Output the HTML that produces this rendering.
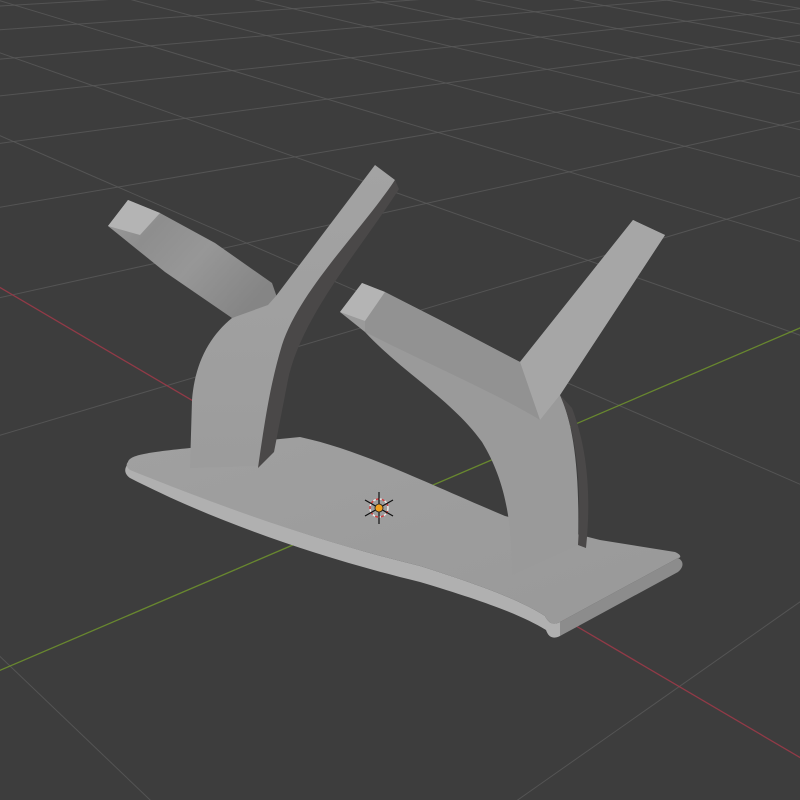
<!DOCTYPE html>
<html><head><meta charset="utf-8"><style>
html,body{margin:0;padding:0;background:#3d3d3d;width:800px;height:800px;overflow:hidden}
svg{display:block;overflow:hidden}
</style></head><body>
<svg id="s" width="800" height="800" viewBox="0 0 800 800" xmlns="http://www.w3.org/2000/svg">
<defs>
<linearGradient id="armL" x1="0" y1="0" x2="1" y2="0.6">
<stop offset="0" stop-color="#9c9c9c"/><stop offset="0.3" stop-color="#8e8e8e"/><stop offset="0.6" stop-color="#979797"/><stop offset="1" stop-color="#858585"/>
</linearGradient>
<linearGradient id="trunk" x1="0" y1="0" x2="0" y2="1">
<stop offset="0" stop-color="#a3a3a3"/><stop offset="1" stop-color="#9c9c9c"/>
</linearGradient>
<linearGradient id="baseTop" x1="0" y1="0" x2="1" y2="1">
<stop offset="0" stop-color="#a0a0a0"/><stop offset="1" stop-color="#999999"/>
</linearGradient>
</defs>
<g id="grid"></g>
<!-- base front strip -->
<path d="M128,464 C200,498 300,537 420,566 C480,585 520,600 545,616 C548,622 552,626 560,622 L560,636 C552,640 548,636 546,630 C520,614 480,600 420,582 C300,553 200,514 130,478 C124,474 124,468 128,464 Z" fill="#b0b0b0"/>
<path d="M560,622 L678,558 C684,561 684,567 678,572 L560,636 Z" fill="#8c8c8c"/>
<path d="M128,462 C130,456 140,453 190,448 L270,440 L300,437 C360,450 420,480 505,516 L600,540 L675,552 C682,555 681,558 678,558 L560,622 C552,626 548,622 545,616 C520,600 480,585 420,566 C300,537 200,498 130,470 C126,467 126,464 128,462 Z" fill="url(#baseTop)"/>
<!-- left post: left arm -->
<path d="M108,226 L128,200 L160,213 L215,243 L272,283 L280,306 L232,318 L165,272 Z" fill="url(#armL)"/>
<path d="M108,226 L128,200 L160,213 L140,235 Z" fill="#b4b4b4"/>
<!-- left post trunk + right arm -->
<path d="M190,468 L192,400 C195,362 210,336 232,318 L268,305 L276,296 L375,165 L395,180 C360,240 300,300 283,350 C272,395 266,435 258,466 Z" fill="url(#trunk)"/>
<path d="M395,180 L399,189 C360,250 298,320 287,385 L274,452 L258,468 C265,420 270,385 282,345 C300,290 360,232 395,180 Z" fill="#4a4848"/>
<!-- right post -->
<path d="M340,312 L362,283 L385,292 L440,320 L520,362 L633,220 L665,235 L560,395 C574,425 580,475 578,545 L512,575 C512,520 505,480 482,442 C452,400 402,372 365,332 Z" fill="#9a9a9a"/>
<path d="M340,312 L362,283 L385,292 L365,321 Z" fill="#b4b4b4"/>
<path d="M520,362 L633,220 L665,235 L560,395 L540,420 Z" fill="#a6a6a6"/>
<path d="M365,321 L385,292 L520,362 L540,420 C500,395 430,365 365,332 Z" fill="#8d8d8d" opacity="0.6"/>
<path d="M560,395 L572,408 C586,445 592,490 586,548 L578,545 C582,480 576,432 560,395 Z" fill="#4a4848"/>
<!-- 3d cursor -->
<g transform="translate(379,508)">
<circle r="9" fill="none" stroke="#e8e8e8" stroke-width="1.5" stroke-dasharray="3 3"/>
<circle r="9" fill="none" stroke="#d04040" stroke-width="1.5" stroke-dasharray="3 3" stroke-dashoffset="3"/>
<line x1="0" y1="-16" x2="0" y2="16" stroke="#111" stroke-width="1.2"/>
<line x1="-14" y1="8" x2="14" y2="-8" stroke="#111" stroke-width="1.2"/>
<line x1="-14" y1="-8" x2="14" y2="8" stroke="#111" stroke-width="1.2"/>
<circle r="4" fill="#f0a020" stroke="#222" stroke-width="0.8"/>
</g>
</svg>
<script>
(function(){
var g=document.getElementById('grid');var NS='http://www.w3.org/2000/svg';
var O=[377,509],R=[-1000,-300],G=[1800,-100],a=-0.18,b=0.205;
function P(u,v){var w=1+a*u+b*v;return [(O[0]+a*u*R[0]+b*v*G[0])/w,(O[1]+a*u*R[1]+b*v*G[1])/w,w];}
function clip(x){return Math.max(-2000,Math.min(2800,x));}
function seg(p,q,col,op,sw){var l=document.createElementNS(NS,'line');l.setAttribute('x1',clip(p[0]).toFixed(1));l.setAttribute('y1',clip(p[1]).toFixed(1));l.setAttribute('x2',clip(q[0]).toFixed(1));l.setAttribute('y2',clip(q[1]).toFixed(1));l.setAttribute('stroke',col);l.setAttribute('stroke-opacity',op.toFixed(2));l.setAttribute('stroke-width',sw);g.appendChild(l);}
var axes=[];
function draw(fixedU,k){
 var ws=[];for(var w=0.05;w<40;w*=1.25)ws.push(w);
 var prev=null;
 for(var i=0;i<ws.length;i++){var w=ws[i],u,v;
  if(fixedU){u=k;v=(w-1-a*k)/b;}else{v=k;u=(w-1-b*k)/a;}
  var p=P(u,v);
  if(prev){var col='#5a5a5a',op=Math.max(0.25,Math.min(0.8,1-w/20)),sw=1;
   if(k===0){axes.push([prev,p,fixedU?'#6d8f2e':'#9a3a48']);}
   else seg(prev,p,col,op,sw);}
  prev=p;}
}
for(var k=-120;k<=120;k++){draw(true,k);draw(false,k);}
for(var i=0;i<axes.length;i++)seg(axes[i][0],axes[i][1],axes[i][2],0.9,1.3);
})();
</script>
</body></html>
